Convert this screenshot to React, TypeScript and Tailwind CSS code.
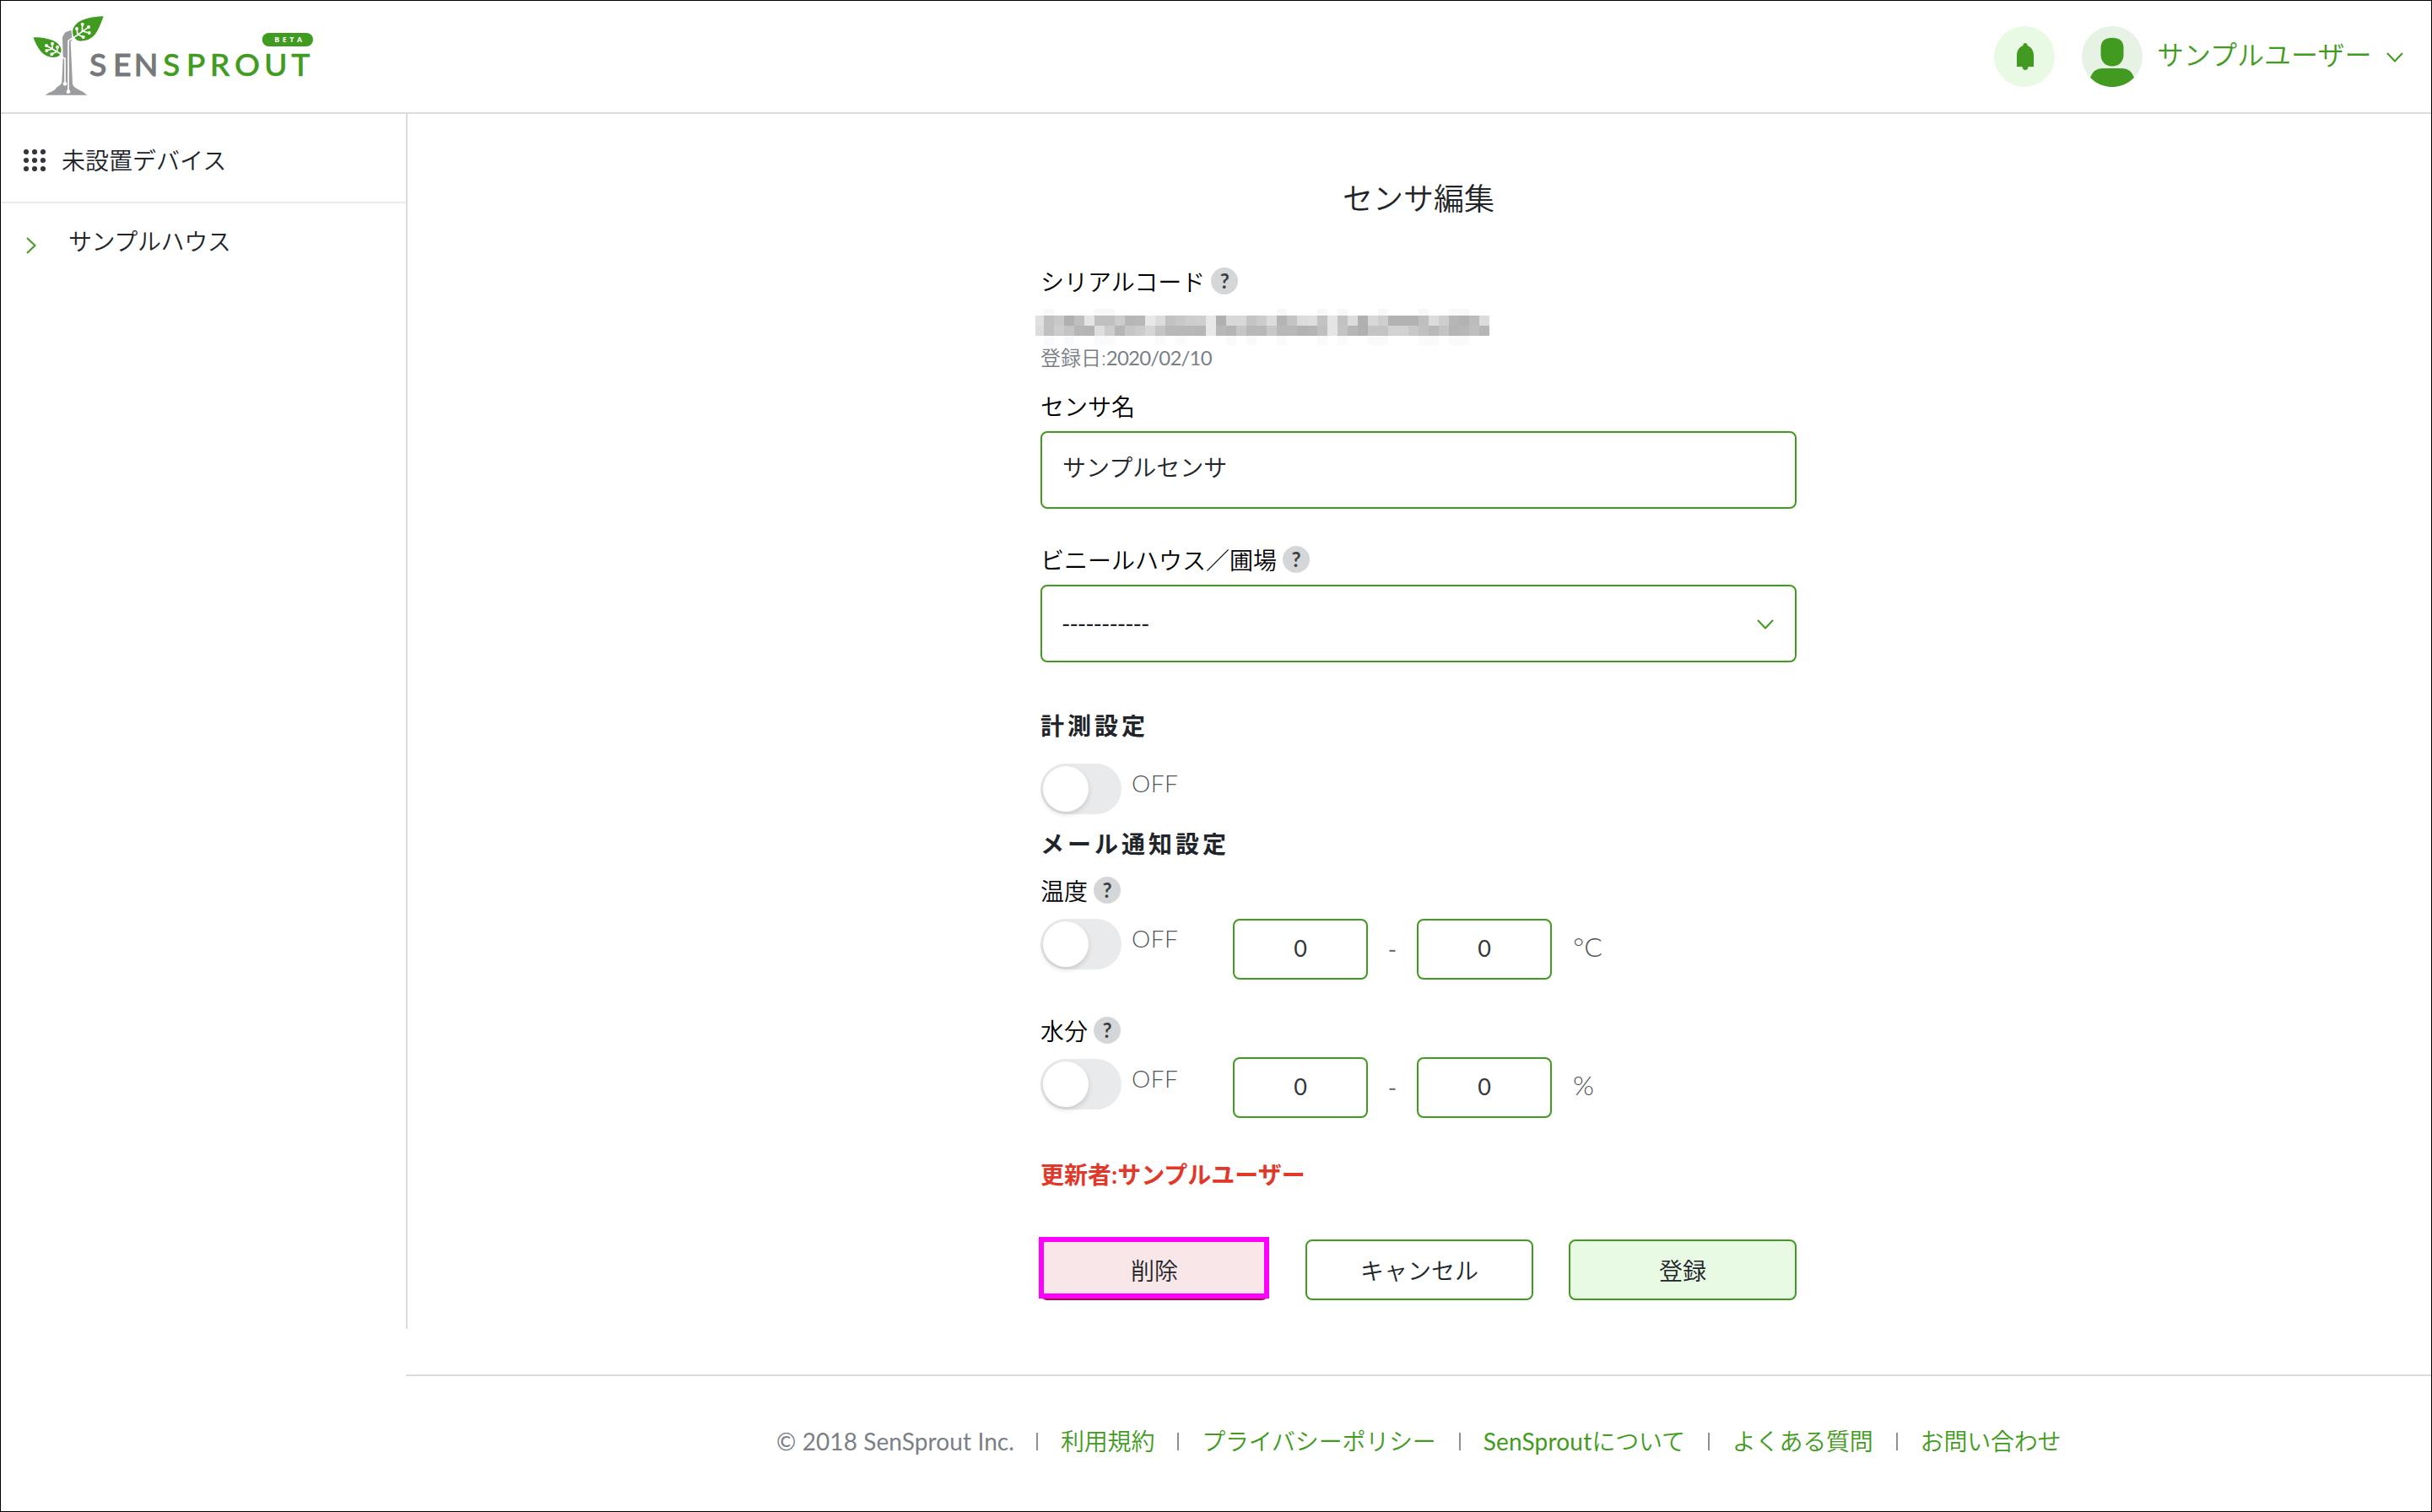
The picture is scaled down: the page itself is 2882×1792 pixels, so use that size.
import { ReactNode } from "react";

// serial number is hidden behind a mosaic, two rows of 12px cells
const MOSAIC_TOP =
    "e0 c0 c8 b0 bf e4 c0 c0 cc b6 b8 e8 dc c2 c8 cd cf e8 b0 d8 d8 c4 cc dc b4 c4 dc de c2 e4 c2 dc b0 d8 ce b2 b2 b2 bf dc ce b6 b2 bc dc".split(" ");
const MOSAIC_BOTTOM =
    "dc c0 cc c4 b6 b4 de cc b6 c6 cc d6 c4 b8 b8 b8 b6 e8 b8 b4 c6 b8 b8 c8 b8 b8 b2 b4 bf e4 c4 b6 b0 c4 c4 d2 d2 c8 c0 b8 c4 b4 b8 be b6".split(" ");
const MOSAIC_FADE_TOP = [1, 6, 7, 24, 28, 30, 34, 38, 41, 42];
const MOSAIC_FADE_BOTTOM = [1, 3, 6, 7, 12, 14, 19, 21, 24, 28, 30, 33, 34, 38, 39, 41, 42];

const LINKS = [
    { latin: "", text: "利用規約" },
    { latin: "", text: "プライバシーポリシー" },
    { latin: "SenSprout", text: "について" },
    { latin: "", text: "よくある質問" },
    { latin: "", text: "お問い合わせ" },
];

export default function App() {
    return (
        <div className="flex h-[1792px] w-[2882px] flex-col border border-black bg-white font-['Lato','Noto_Sans_CJK_JP',sans-serif] text-[28px] leading-8 text-[#212529]">
            <Header />
            <div className="flex h-[1440px]">
                <Sidebar />
                <main className="pl-[750px]">
                    <SensorForm />
                </main>
            </div>
            <Footer />
        </div>
    );
}

function Header() {
    return (
        <header className="flex h-[134px] shrink-0 items-start justify-between border-b-2 border-[#dadcdd]">
            <Logo />
            <div className="mt-[30px] mr-[33px] flex h-[72px] items-center text-[#419b20]">
                <div className="grid size-[72px] place-content-center rounded-full bg-[#e8fae4]">
                    <svg width="22" height="34" viewBox="0 0 22 34" fill="currentColor" className="mt-px ml-px">
                        <path d="M11 0C12.3 0 13.6 1 13.8 3.2C18.6 5 21 9.500 21 15V26Q22 28 19.500 28H14.500C14.500 30.500 13 32 11 32S7.500 30.500 7.500 28H2.500Q0 28 1 26V15C1 9.500 3.400 5 8.200 3.200C8.400 1 9.700 0 11 0Z" />
                    </svg>
                </div>
                <svg width="72" height="72" viewBox="0 0 72 72" className="ml-8">
                    <circle cx="36" cy="36" r="36" fill="#e6f2e4" />
                    <path d="M36 13.800C44 13.800 49.500 17 49.500 26V34C49.500 42 44 47.600 36 47.600S22.500 42 22.500 34V26C22.500 17 28 13.800 36 13.800Z" fill="#419b20" />
                    <path d="M10 61Q14 50 24 50H48Q58 50 62 61A36 36 0 0 1 10 61Z" fill="#419b20" />
                </svg>
                <span className="-mt-[5px] ml-[17px] w-[256px] text-[32px] font-[350] whitespace-nowrap">サンプルユーザー</span>
                <Chevron className="mt-[2px] ml-[16px]" />
            </div>
        </header>
    );
}

function Logo() {
    return (
        <svg width="400" height="132" viewBox="3 3 1200 396">
            {/* trunk */}
            <path
                d="M222 131L232 115L254 107L258 140L251 148L258 300Q262 310 274 316Q296 326 310 338H161Q175 328 186 325Q196 320 204 308Q218 302 220 290L224 206Z"
                fill="#9b9c9f"
            />
            <g stroke="#fff" strokeWidth="5" fill="none">
                <path d="M216 201L231 208V296" />
                <path d="M262 132L243 145V324" />
            </g>
            <circle cx="231" cy="298" r="7" fill="#fff" />
            <circle cx="243" cy="326" r="7" fill="#fff" />
            {/* leaves */}
            <g fill="#419b20" stroke="#fff" strokeWidth="4">
                <path d="M371 55C352 112 336 148 286 148C266 145 256 132 256 113C258 74 310 58 371 55Z" />
                <path d="M115 130C174 130 214 146 220 176C220 194 212 206 190 206C150 206 130 172 115 130Z" />
            </g>
            <g stroke="#fff" strokeWidth="5" fill="none" strokeLinecap="round">
                <path d="M256 138L314 97M276 124L273 103M292 112L293 86M278 123L296 132M294 111L317 117" />
                <path d="M220 194L165 162M203 184L204 167M186 175L186 155M202 184L184 192M185 174L166 180" />
            </g>
            <g fill="#fff">
                <circle cx="273" cy="102" r="6" />
                <circle cx="293" cy="86" r="6" />
                <circle cx="315" cy="96" r="6" />
                <circle cx="317" cy="117" r="6" />
                <circle cx="296" cy="132" r="6" />
                <circle cx="204" cy="167" r="6" />
                <circle cx="186" cy="155" r="6" />
                <circle cx="165" cy="162" r="6" />
                <circle cx="166" cy="180" r="6" />
                <circle cx="184" cy="193" r="6" />
            </g>
            <g fontFamily="Lato" fontWeight="500" fontSize="112">
                <text x="318 402 476" y="271" fill="#77787b" stroke="#77787b" strokeWidth="3">
                    SEN
                </text>
                <text x="579 662 746 834 939 1036" y="271" fill="#419b20" stroke="#419b20" strokeWidth="1.500">
                    SPROUT
                </text>
            </g>
            <rect x="932" y="117" width="181" height="48" rx="24" fill="#419b20" />
            <text x="976" y="150" fontFamily="Open Sans" fontWeight="700" fontSize="26" textLength="98" fill="#fff">
                BETA
            </text>
        </svg>
    );
}

function Sidebar() {
    return (
        <aside className="w-[482px] shrink-0 border-r-2 border-[#dadcdf] font-[350]">
            <div className="flex h-[106px] items-center border-b-2 border-[#e9eaec] pl-[27px]">
                <svg width="26" height="26" viewBox="0 0 26 26" fill="#33363a" className="mt-1.5">
                    {[3, 13, 23].map((y) => [3, 13, 23].map((x) => <circle key={`${x}-${y}`} cx={x} cy={y} r="3.100" />))}
                </svg>
                <span className="mt-[5px] ml-[19px]">未設置デバイス</span>
            </div>
            <div className="flex h-[90px] items-center pl-[30px]">
                <svg width="12" height="20" viewBox="0 0 12 20" fill="none" stroke="#419b20" strokeWidth="2" className="mt-[10px]">
                    <path d="M1 1L10.500 10L1 19" />
                </svg>
                <span className="ml-[38px] tracking-[-0.400px]">サンプルハウス</span>
            </div>
        </aside>
    );
}

function SensorForm() {
    return (
        <div className="w-[896px]">
            <h1 className="mt-[73px] h-[54px] text-center text-[36px] leading-[54px] font-[350]">センサ編集</h1>

            <Label className="mt-[55px]" help>
                シリアルコード
            </Label>
            <Mosaic />
            <p className="mt-[3px] h-6 text-2xl leading-6 font-[350] text-[#7a8086]">
                登録日:<span className="font-normal tracking-[-0.800px]">2020/02/10</span>
            </p>

            <Label className="mt-[29px]">センサ名</Label>
            <div className="mt-[14px] flex h-[92px] items-center rounded-lg border-2 border-[#419b20] pb-1.5 pl-6 font-[350]">
                サンプルセンサ
            </div>

            <Label className="mt-[44px]" help>
                ビニールハウス／圃場
            </Label>
            <div className="mt-[14px] flex h-[92px] items-center justify-between rounded-lg border-2 border-[#419b20] pr-[25px] pl-[23px]">
                <span className="tracking-[-1px]">-----------</span>
                <Chevron className="mt-0.5" />
            </div>

            <h2 className="mt-[59px] h-8 font-bold tracking-[4px]">計測設定</h2>
            <div className="mt-[29px]">
                <Toggle />
            </div>

            <h2 className="mt-[19px] h-8 font-bold tracking-[4px]">メール通知設定</h2>
            <Label className="mt-[23px]" help>
                温度
            </Label>
            <div className="mt-[18px] flex">
                <Toggle />
                <Range unit="°C" />
            </div>
            <Label className="mt-[44px]" help>
                水分
            </Label>
            <div className="mt-4 flex">
                <div className="mt-0.5">
                    <Toggle />
                </div>
                <Range unit="%" />
            </div>

            <p className="mt-[51px] h-8 font-bold text-[#e0392b]">更新者:サンプルユーザー</p>

            <div className="mt-[61px] flex font-[350]">
                <button className="relative h-[72px] w-[270px] rounded-lg border-2 border-[#a3123f] bg-[#f9e6e8] pt-0.5">
                    削除
                    <span className="absolute -top-[5px] -left-1 h-[73px] w-[273px] border-[6px] border-[#ff00ff]" />
                </button>
                <button className="ml-11 h-[72px] w-[270px] rounded-lg border-2 border-[#419b20] pt-0.5">キャンセル</button>
                <button className="ml-[42px] h-[72px] w-[270px] rounded-lg border-2 border-[#419b20] bg-[#e8fae4] pt-0.5">登録</button>
            </div>
        </div>
    );
}

function Label({ children, className, help }: { children: ReactNode; className: string; help?: boolean }) {
    return (
        <div className={`flex h-8 items-center text-black ${className}`}>
            <span className="mt-0.5 font-[350]">{children}</span>
            {help && (
                <span className="ml-[7px] grid size-8 place-content-center rounded-full bg-[#d4d6d8] text-[24px] font-bold text-[#3c4044]">?</span>
            )}
        </div>
    );
}

function Mosaic() {
    return (
        <svg width="538" height="43" viewBox="0 0 538 43" shapeRendering="crispEdges" className="mt-[17px] -ml-1.5">
            {MOSAIC_FADE_TOP.map((c) => (
                <rect key={c} x={c * 12 - 2} y="0" width="12" height="8" fill="#f8f8fa" />
            ))}
            {MOSAIC_FADE_BOTTOM.map((c) => (
                <rect key={c} x={c * 12 - 2} y="32" width="12" height="11" fill="#f9fafb" />
            ))}
            {MOSAIC_TOP.map((v, i) => (
                <rect key={i} x={i * 12 - 2} y="8" width="12" height="12" fill={`#${v}${v}${v}`} />
            ))}
            {MOSAIC_BOTTOM.map((v, i) => (
                <rect key={i} x={i * 12 - 2} y="20" width="12" height="12" fill={`#${v}${v}${v}`} />
            ))}
        </svg>
    );
}

function Toggle() {
    return (
        <div className="flex h-[60px] w-[228px]">
            <div className="h-[60px] w-24 rounded-full bg-[#e9eaec] p-[3px]">
                <div className="size-[54px] rounded-full bg-white shadow-[0_3px_6px_rgba(0,0,0,0.14)]" />
            </div>
            <span className="mt-[7px] ml-3 font-light tracking-[0.500px] text-[#50565c]">OFF</span>
        </div>
    );
}

function Range({ unit }: { unit: string }) {
    return (
        <div className="flex h-[72px] items-center text-[#6c757d]">
            <NumberBox />
            <span className="w-[58px] text-center">-</span>
            <NumberBox />
            <span className="-mt-1.5 ml-[25px] text-[32px] font-light text-[#50565c]">{unit}</span>
        </div>
    );
}

function NumberBox() {
    return (
        <div className="flex h-[72px] w-[160px] items-center justify-center rounded-lg border-2 border-[#419b20] pb-[3px] text-[27px] text-[#33373b]">
            0
        </div>
    );
}

function Chevron({ className }: { className: string }) {
    return (
        <svg width="20" height="12" viewBox="0 0 20 12" fill="none" stroke="#419b20" strokeWidth="2" className={className}>
            <path d="M1 1L10 10.500L19 1" />
        </svg>
    );
}

function Footer() {
    return (
        <footer className="mt-[54px] ml-[480px] flex flex-1 items-start border-t-2 border-[#dadcdb] pt-[61px] pl-[439px] font-[350] whitespace-nowrap">
            <span className="w-[281px] font-normal tracking-[0.100px] text-[#7a8086]">© 2018 SenSprout Inc.</span>
            {LINKS.map((link) => (
                <span key={link.text} className="flex items-center">
                    <span className="mx-[27px] h-[21px] w-0.5 bg-[#8b9095]" />
                    <a className="tracking-[-0.200px] text-[#419b20]">
                        {link.latin && <span className="font-normal tracking-[0.200px]">{link.latin}</span>}
                        {link.text}
                    </a>
                </span>
            ))}
        </footer>
    );
}
